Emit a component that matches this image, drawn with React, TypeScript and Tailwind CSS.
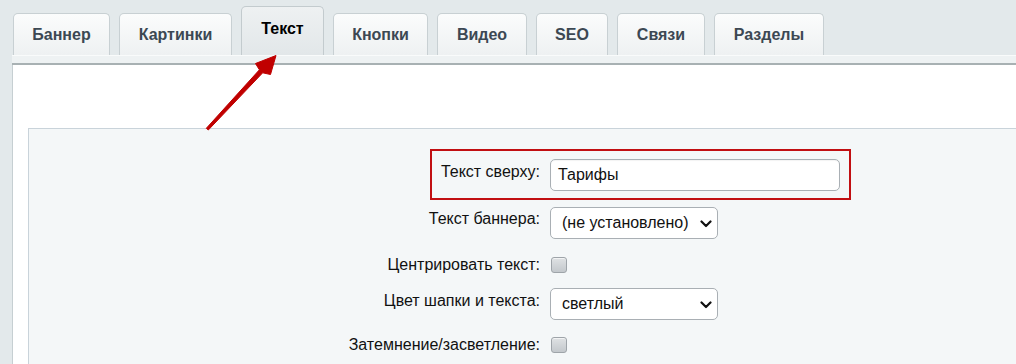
import React from "react";

const tabs = [
  { label: "Баннер", w: 97 },
  { label: "Картинки", w: 113 },
  { label: "Текст", w: 83, active: true },
  { label: "Кнопки", w: 95 },
  { label: "Видео", w: 90 },
  { label: "SEO", w: 72 },
  { label: "Связи", w: 88 },
  { label: "Разделы", w: 110 },
];

function Chevron() {
  return (
    <svg width="12" height="8" viewBox="0 0 12 8" className="absolute right-[5px] top-[12px]">
      <path d="M1.5 1.5 L6 6 L10.5 1.5" fill="none" stroke="#111" strokeWidth="2.2" strokeLinecap="round" strokeLinejoin="round" />
    </svg>
  );
}

function Checkbox() {
  return (
    <div className="w-[16px] h-[16px] rounded-[3px] border border-[#9ea4a9] bg-gradient-to-b from-[#dfe2e4] to-[#c3c8cc] shadow-[inset_0_1px_0_rgba(255,255,255,0.6)]" />
  );
}

export default function App() {
  return (
    <div className="relative w-[1016px] h-[364px] overflow-hidden bg-[#e3e9eb] font-['Liberation_Sans',Arial,sans-serif]">
      {/* Tabs */}
      <div className="flex items-end gap-[9px] h-[55px] pl-[13px]">
        {tabs.map((t) =>
          t.active ? (
            <div
              key={t.label}
              style={{ width: t.w }}
              className="h-[49px] rounded-t-[5px] border border-b-0 border-[#c3cbce] bg-gradient-to-b from-[#eef1f2] to-[#e2e7e9] flex items-center justify-center pb-[5px] text-[16px] font-bold text-black"
            >
              {t.label}
            </div>
          ) : (
            <div
              key={t.label}
              style={{ width: t.w }}
              className="h-[42px] rounded-t-[5px] border border-b-0 border-[#c8d0d3] bg-gradient-to-b from-[#fbfcfc] to-[#eef1f2] flex items-center justify-center text-[16px] font-bold text-[#3c4853]"
            >
              {t.label}
            </div>
          )
        )}
      </div>
      {/* Bar under tabs */}
      <div className="ml-[12px] h-[10px] bg-[#eef2f3] border-t border-[#f9fbfb] border-b-2 border-b-[#a8b1b3]" />
      {/* Content */}
      <div className="ml-[12px] h-[400px] bg-white border-l border-[#c6cfd2] pl-[15px] pt-[63px]">
        <div className="relative h-[300px] bg-[#f4f7f8] border-t border-l border-[#c9d3da] text-[16px] text-[#111]">
          {/* Row 1 */}
          <div className="relative flex items-start pt-[30px]">
            <div className="w-[521px] pr-[10px] pt-[1px] text-right">Текст сверху:</div>
            <div className="w-[290px] h-[32px] rounded-[5px] border border-[#a9afb4] bg-white flex items-center pl-[7px] shadow-[inset_0_1px_1px_rgba(0,0,0,0.05)]">
              Тарифы
            </div>
            <div className="absolute left-[401px] top-[20px] w-[421px] h-[51px] border-2 border-[#c10f12]" />
          </div>
          {/* Row 2 */}
          <div className="flex items-start mt-[16px]">
            <div className="w-[521px] pr-[10px] pt-[0px] text-right">Текст баннера:</div>
            <div className="relative w-[168px] h-[32px] rounded-[5px] border border-[#a9afb4] bg-white flex items-center pl-[11px]">
              (не установлено)
              <Chevron />
            </div>
          </div>
          {/* Row 3 */}
          <div className="flex items-center mt-[18px] h-[16px]">
            <div className="w-[521px] pr-[10px] text-right">Центрировать текст:</div>
            <div className="pl-[1px]"><Checkbox /></div>
          </div>
          {/* Row 4 */}
          <div className="flex items-start mt-[15px]">
            <div className="w-[521px] pr-[10px] pt-[1px] text-right">Цвет шапки и текста:</div>
            <div className="relative w-[168px] h-[32px] rounded-[5px] border border-[#a9afb4] bg-white flex items-center pl-[11px]">
              светлый
              <Chevron />
            </div>
          </div>
          {/* Row 5 */}
          <div className="flex items-center mt-[17px] h-[16px]">
            <div className="w-[521px] pr-[10px] text-right">Затемнение/засветление:</div>
            <div className="pl-[1px]"><Checkbox /></div>
          </div>
        </div>
      </div>
      {/* Arrow annotation */}
      <svg className="absolute left-0 top-0 pointer-events-none" width="1016" height="364" viewBox="0 0 1016 364">
        <polygon
          points="206.3,128.3 259.4,69.8 255.5,63.5 276,55.5 270.5,74.5 262.7,72.8 208.3,130"
          fill="#c00000"
          stroke="#c00000"
          strokeWidth="1"
          strokeLinejoin="round"
        />
      </svg>
    </div>
  );
}
